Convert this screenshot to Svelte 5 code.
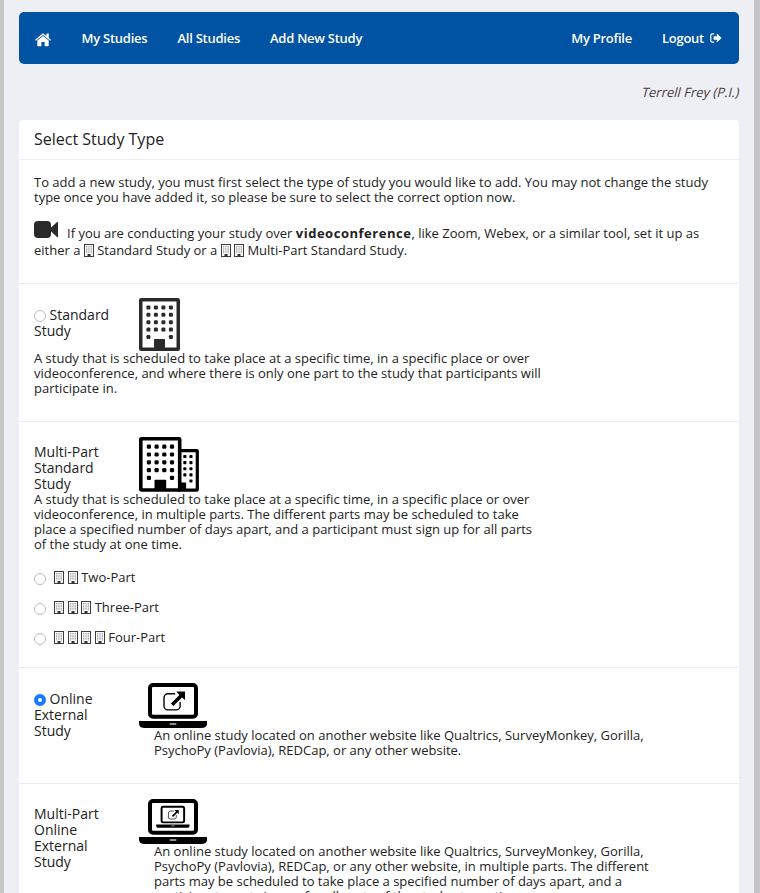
<script>
  const parts = [
    { count: 2, label: 'Two-Part' },
    { count: 3, label: 'Three-Part' },
    { count: 4, label: 'Four-Part' }
  ];
  const dots = [];
  for (let r = 0; r < 5; r++)
    for (let c = 0; c < 4; c++)
      if (r < 4 || c === 0 || c === 3) dots.push([c, r]);
  let selected = $state('external');
</script>

{#snippet miniBuilding()}
  <svg class="mini" viewBox="0 0 10 13" width="10" height="13">
    <rect x=".5" y=".5" width="9" height="12" fill="#fff" stroke="#3c3c3c" />
    <path d="M2.500 2v8M4.200 2v7M5.900 2v7M7.500 2v8" stroke="#8a8a8a" stroke-width=".8" stroke-dasharray="1.100 .5" />
    <rect x="3.500" y="10" width="3" height="2.500" fill="#333" />
  </svg>
{/snippet}

{#snippet arrowBox()}
  <path d="M13.600 3.300H6.500a4 4 0 0 0-4 4v8.200a4 4 0 0 0 4 4h8.100a4 4 0 0 0 4-4V11.500" fill="none" stroke="#000" stroke-width="1.400" />
  <path d="M14.800 1h8.700v8.700l-3-2.700-8.600 8.600-2.500-2.500 8.500-8.600z" />
{/snippet}

{#snippet laptop()}
  <rect x="11" y="2" width="46" height="31.800" rx="3" fill="#fff" stroke="#000" stroke-width="4" />
  <path d="M0 38h68v2.500q0 4.500-6 4.500H6q-6 0-6-4.500z" />
  <rect x="30.500" y="40.300" width="7" height="1.500" rx=".7" fill="#bbb" />
{/snippet}

<div class="page">
  <nav>
    <a class="home" href="#home" aria-label="Home">
      <svg width="16" height="14" viewBox="0 0 16 14" fill="#fff">
        <path d="M8 .2 11.400 3V.5h2.400V5L16 6.800l-.8.9L8 1.900.8 7.700 0 6.800z" />
        <path d="M8 3l5.700 4.600V12.600q0 .7-.7.7H9.600V9H6.400v4.300H3q-.7 0-.7-.7V7.600z" />
      </svg>
    </a>
    <a href="#mine">My Studies</a>
    <a href="#all">All Studies</a>
    <a href="#add">Add New Study</a>
    <span class="grow"></span>
    <a href="#profile">My Profile</a>
    <a class="logout" href="#logout">Logout
      <svg width="12" height="10" viewBox="0 0 12 10">
        <path d="M4.200.8H2.500Q.8.8.8 2.500v5Q.8 9.200 2.500 9.200H4.200" fill="none" stroke="#fff" stroke-width="1.200" />
        <path d="M3.600 3.300h3.200V.6L11.700 5 6.800 9.400V6.700H3.600z" fill="#fff" />
      </svg>
    </a>
  </nav>
  <p class="user"><span>Terrell Frey (P.I.)</span></p>

  <main>
    <h1>Select Study Type</h1>
    <section class="intro">
      <p>To add a new study, you must first select the type of study you would like to add. You may not change the study<br />type once you have added it, so please be sure to select the correct option now.</p>
      <p class="video">
        <svg class="camera" width="24" height="17" viewBox="0 0 24 17" fill="#2a2a2a">
          <rect width="17" height="17" rx="4" /><path d="M15 8.500 23 1q1-.7 1 .5v14q0 1.200-1 .5z" />
        </svg>If you are conducting your study over <b>videoconference</b>, like Zoom, Webex, or a similar tool, set it up as
      </p>
      <p class="second">either a {@render miniBuilding()} Standard Study or a {@render miniBuilding()} {@render miniBuilding()} Multi-Part Standard Study.</p>
    </section>

    <section class="standard">
      <div class="head">
        <label class="name"><input type="radio" name="type" value="standard" bind:group={selected} />Standard<br />Study</label>
        <svg width="41" height="53" viewBox="0 0 41 53" fill="#2a2a2a">
          <rect x="1.750" y="1.750" width="37.500" height="49.500" rx=".5" fill="#fff" stroke="#2a2a2a" stroke-width="3.500" />
          {#each dots as [c, r]}
            <rect x={7.4 + c * 7.5} y={7.4 + r * 7.4} width="4" height="4" rx="1.200" />
          {/each}
          <path d="M15 51v-9.300q0-.7.7-.7h9.600q.7 0 .7.7V51z" />
        </svg>
      </div>
      <p>A study that is scheduled to take place at a specific time, in a specific place or over<br />videoconference, and where there is only one part to the study that participants will<br />participate in.</p>
    </section>

    <section class="multi">
      <div class="head">
        <div class="name">Multi-Part<br />Standard<br />Study</div>
        <svg width="60" height="55" viewBox="0 0 60 55">
          <rect x="40" y="13.700" width="18.300" height="39.400" rx=".6" fill="#fff" stroke="#000" stroke-width="3.200" />
          <rect x="1.800" y="1.800" width="38.900" height="51.200" rx=".6" fill="#fff" stroke="#000" stroke-width="3.600" />
          {#each dots as [c, r]}
            <rect x={7.8 + c * 7.7} y={7.6 + r * 7.8} width="4.200" height="4.200" rx="1.300" />
          {/each}
          {#each [0, 1, 2, 3, 4] as r}
            {#if r < 4}<rect x="44.300" y={18 + r * 6.1} width="3.100" height="3.100" rx=".7" />{/if}
            <rect x="50.400" y={18 + r * 6.1} width="3.100" height="3.100" rx=".7" />
          {/each}
          <path d="M15.500 53V43.500q0-.7.7-.7h10.300q.7 0 .7.7V53zM42 45.500h4.500q.6 0 .6.600V53H42z" />
        </svg>
      </div>
      <p>A study that is scheduled to take place at a specific time, in a specific place or over<br />videoconference, in multiple parts. The different parts may be scheduled to take<br />place a specified number of days apart, and a participant must sign up for all parts<br />of the study at one time.</p>
      <div class="options">
        {#each parts as part}
          <label>
            <input type="radio" name="type" value={part.label} bind:group={selected} />
            <span class="icons">{#each Array(part.count) as _}{@render miniBuilding()}{/each}</span>{part.label}
          </label>
        {/each}
      </div>
    </section>

    <section class="online">
      <label class="name"><input type="radio" name="type" value="external" bind:group={selected} />Online<br />External<br />Study</label>
      <div class="body">
        <svg width="68" height="45" viewBox="0 0 68 45">
          {@render laptop()}
          <g transform="translate(22.500 7.400)">{@render arrowBox()}</g>
        </svg>
        <p>An online study located on another website like Qualtrics, SurveyMonkey, Gorilla,<br />PsychoPy (Pavlovia), REDCap, or any other website.</p>
      </div>
    </section>

    <section class="online last">
      <div class="name">Multi-Part<br />Online<br />External<br />Study</div>
      <div class="body">
        <svg width="68" height="45" viewBox="0 0 68 45">
          {@render laptop()}
          <g transform="translate(17.200 6.800) scale(.49)">
            {@render laptop()}
            <g transform="translate(22.500 7.400)">{@render arrowBox()}</g>
          </g>
        </svg>
        <p>An online study located on another website like Qualtrics, SurveyMonkey, Gorilla,<br />PsychoPy (Pavlovia), REDCap, or any other website, in multiple parts. The different<br />parts may be scheduled to take place a specified number of days apart, and a<br />participant must sign up for all parts of the study at one time.</p>
      </div>
    </section>
  </main>
</div>

<style>
  :global(body) { margin: 0; }
  .page {
    box-sizing: border-box; width: 760px; height: 893px; overflow: hidden;
    padding: 12px 15px 0; border-left: 4px solid #c5c5c5; border-right: 6px solid #c5c5c5;
    background: #eeeff5; color: #222;
    font: 13px/15px "Open Sans", sans-serif;
  }
  nav {
    display: flex; align-items: center; gap: 30px; box-sizing: border-box;
    height: 52px; padding: 0 17px 0 16px; border-radius: 5px; background: #0052a2;
  }
  nav a { color: #fff; font-weight: 600; text-decoration: none; white-space: nowrap; letter-spacing: -.25px; }
  .home { display: flex; margin: 3px .5px 0 0; }
  .grow { flex: 1; }
  .logout { display: flex; align-items: center; gap: 6px; }
  p { margin: 0; white-space: nowrap; }
  svg { display: block; flex: none; }
  .user { margin-top: 21px; height: 35px; text-align: right; color: #443c3c; }
  .user span { display: inline-block; transform: skewX(-14deg); }
  main { height: 790px; border-radius: 4px 4px 0 0; background: #fff; }
  h1 { margin: 0; height: 39px; padding-left: 15px; border-bottom: 1px solid #eeeff2; font-size: 16px; line-height: 39px; font-weight: 400; }
  section { box-sizing: border-box; padding-left: 15px; border-bottom: 1px solid #ebecef; }
  .intro { height: 124px; padding-top: 15px; }
  .video { display: flex; align-items: flex-start; margin-top: 16px; height: 22px; line-height: 25px; white-space: pre; }
  .video b { letter-spacing: .53px; }
  .camera { margin-right: 9px; }
  .second { line-height: 15px; }
  .second .mini { margin-right: 0; }
  .mini { display: inline-block; vertical-align: -2px; }
  .head { display: flex; box-sizing: border-box; }
  .name { width: 105px; flex: none; font-size: 14px; line-height: 16px; }
  input {
    appearance: none; box-sizing: border-box; width: 12px; height: 12px; margin: 0 3.500px 0 0;
    border: 1px solid #bdbdbd; border-radius: 50%; background: #fff; vertical-align: -2px;
  }
  input:checked { border: 4px solid #147aff; }
  .standard { height: 138px; }
  .standard .head { height: 67px; padding-top: 14px; }
  .standard .name { padding-top: 9px; }
  .multi { height: 246px; }
  .multi .head { height: 70px; padding-top: 15px; }
  .multi .name { padding-top: 7px; }
  .options { padding-top: 10px; }
  .options label { display: flex; align-items: center; height: 30px; }
  .options input { margin: 3px 8px 0 0; }
  .icons { display: flex; gap: 3.500px; margin-right: 3.700px; }
  .online { display: flex; height: 116px; padding-top: 15px; }
  .online .name { padding-top: 8px; }
  .body p { padding-left: 15px; }
  .last { border: 0; }
  .last .name { padding-top: 7px; }
</style>
